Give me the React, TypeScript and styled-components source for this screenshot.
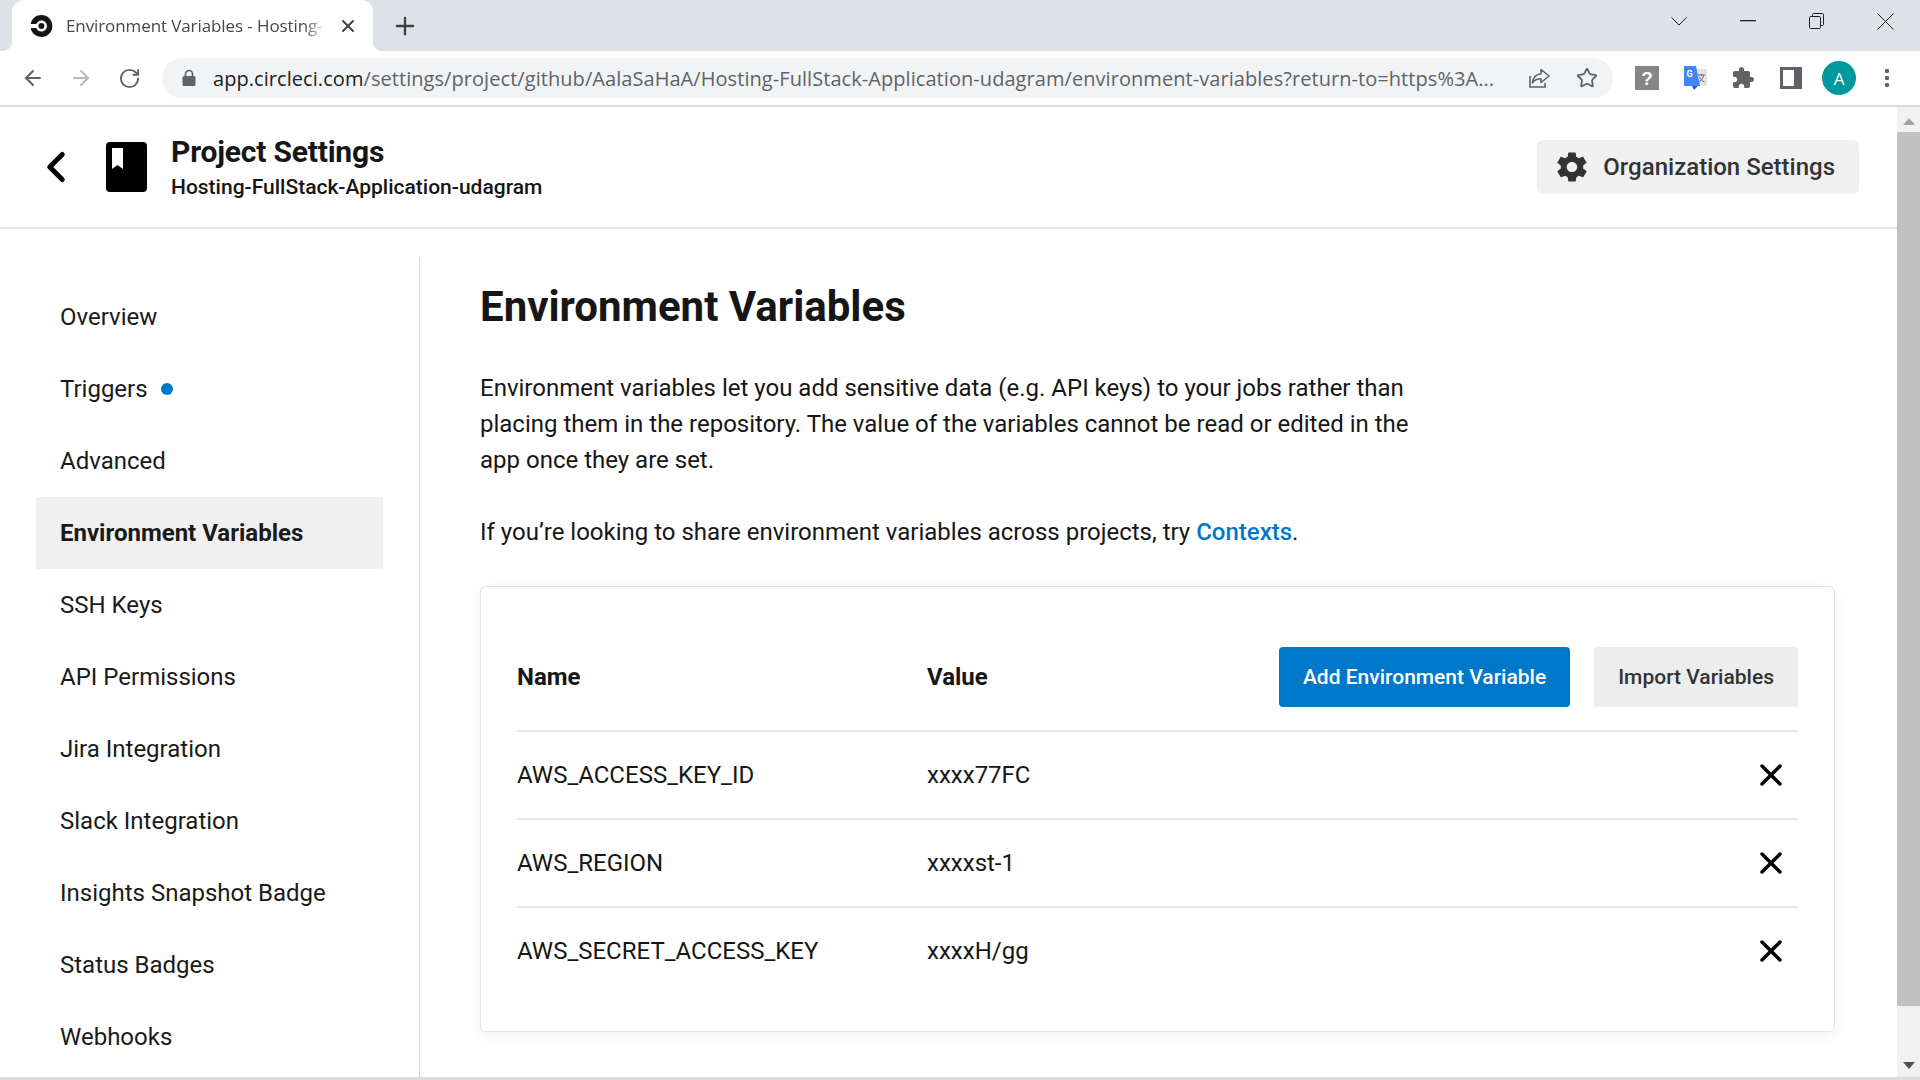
import React from "react";
import styled, { createGlobalStyle } from "styled-components";
import { ArrowLeft, ArrowRight, ChevronLeft, RotateCw, Star, X, Plus, EllipsisVertical } from "lucide-react";
import { IoMdSettings } from "react-icons/io";

const GlobalStyle = createGlobalStyle`
  html, body {
    margin: 0;
    height: 100%;
    overflow: hidden;
    background: #fff;
  }
  * {
    box-sizing: border-box;
  }
`;

const Window = styled.div`
  display: flex;
  flex-direction: column;
  width: 1920px;
  height: 1080px;
  overflow: hidden;
  font-family: Roboto, "Liberation Sans", sans-serif;
  color: #161616;
`;

/* browser chrome */

const TabStrip = styled.div`
  display: flex;
  align-items: flex-end;
  flex: none;
  height: 51px;
  padding-left: 12px;
  background: #dee1e6;
`;

const Tab = styled.div`
  position: relative;
  display: flex;
  align-items: center;
  width: 361px;
  height: 51px;
  padding: 0 15px 0 17px;
  background: #fff;
  border-radius: 12px 12px 0 0;

  &::before,
  &::after {
    content: "";
    position: absolute;
    bottom: 0;
    width: 10px;
    height: 10px;
  }
  &::before {
    left: -10px;
    background: radial-gradient(circle at 0 0, #dee1e6 10px, #fff 10.5px);
  }
  &::after {
    right: -10px;
    background: radial-gradient(circle at 100% 0, #dee1e6 10px, #fff 10.5px);
  }
`;

const TabTitle = styled.span`
  flex: 1;
  margin-left: 13px;
  white-space: nowrap;
  font-family: "Open Sans", "Noto Sans", sans-serif;
  font-size: 17px;
  letter-spacing: -0.1px;
  color: #45474a;
  -webkit-mask-image: linear-gradient(to right, #000 90%, transparent 100%);
  mask-image: linear-gradient(to right, #000 90%, transparent 100%);
`;

const TabClose = styled.span`
  display: flex;
  margin-left: 9px;
  color: #3c4043;
`;

const NewTab = styled.span`
  display: flex;
  margin: 0 0 7px 18px;
  align-self: flex-end;
  height: 36px;
  align-items: center;
  color: #3c4043;
`;

const WindowControls = styled.div`
  display: flex;
  margin-left: auto;
  align-self: flex-start;
  height: 42px;
`;

const WindowControl = styled.span`
  display: flex;
  align-items: center;
  justify-content: center;
  width: 69px;
  color: #202124;
`;

const Toolbar = styled.div`
  display: flex;
  align-items: center;
  flex: none;
  height: 56px;
  padding: 0 9px;
  background: #fff;
  border-bottom: 2px solid #dadce0;
`;

const NavButton = styled.span<{ $faded?: boolean }>`
  display: flex;
  align-items: center;
  justify-content: center;
  width: 48px;
  color: ${(p) => (p.$faded ? "#b6b8bb" : "#5f6368")};
`;

const AddressBar = styled.div`
  display: flex;
  align-items: center;
  width: 1451px;
  height: 40px;
  margin: 0 10px 0 9px;
  padding: 0 2px 0 20px;
  background: #f1f3f4;
  border-radius: 20px;
`;

const Url = styled.span`
  flex: 1;
  margin-left: 17px;
  white-space: nowrap;
  overflow: hidden;
  font-family: "Open Sans", "Noto Sans", sans-serif;
  font-size: 20px;
  letter-spacing: 0.06px;
  color: #5f6368;

  b {
    font-weight: 400;
    color: #202124;
  }
`;

const BarIcon = styled.span`
  display: flex;
  align-items: center;
  justify-content: center;
  flex: none;
  width: 48px;
  color: #5f6368;
`;

const Avatar = styled.span`
  display: flex;
  align-items: center;
  justify-content: center;
  width: 34px;
  height: 34px;
  border-radius: 50%;
  background: #00989f;
  color: #fff;
  font-family: "Open Sans", sans-serif;
  font-size: 17px;
`;

/* page */

const Viewport = styled.div`
  display: flex;
  flex: 1;
  min-height: 0;
`;

const Page = styled.div`
  display: flex;
  flex-direction: column;
  flex: 1;
  min-width: 0;
`;

const Header = styled.header`
  display: flex;
  align-items: center;
  flex: none;
  height: 122px;
  padding: 0 38px 0 31px;
  border-bottom: 2px solid #e3e3e3;
`;

const BackLink = styled.span`
  display: flex;
  color: #000;
`;

const BookIcon = styled.svg`
  width: 41px;
  height: 50px;
  margin-left: 25px;
  flex: none;
`;

const HeaderText = styled.div`
  margin-left: 24px;
`;

const PageTitle = styled.div`
  font-size: 30px;
  line-height: 36px;
  font-weight: 700;
  letter-spacing: -0.2px;
`;

const RepoName = styled.div`
  font-size: 21px;
  line-height: 26px;
  font-weight: 500;
  margin-top: 4px;
`;

const OrgButton = styled.button`
  display: flex;
  align-items: center;
  gap: 13px;
  height: 54px;
  margin-left: auto;
  padding: 0 24px 0 17px;
  border: 0;
  border-radius: 6px;
  background: #f0f0f0;
  color: #333;
  font: 500 24px Roboto, sans-serif;
`;

const Body = styled.div`
  display: flex;
  flex: 1;
  min-height: 0;
  padding-top: 28px;
`;

const Sidebar = styled.nav`
  flex: none;
  width: 420px;
  padding: 24px 36px 0;
  border-right: 1px solid #d6d6d6;
`;

const NavItem = styled.div<{ $active?: boolean }>`
  display: flex;
  align-items: center;
  width: 347px;
  height: 72px;
  padding-left: 24px;
  font-size: 24px;
  font-weight: ${(p) => (p.$active ? 700 : 400)};
  background: ${(p) => (p.$active ? "#f0f0f0" : "transparent")};
  color: #1a1a1a;
`;

const Dot = styled.span`
  width: 12px;
  height: 12px;
  margin-left: 13px;
  border-radius: 50%;
  background: #0078ca;
`;

const Content = styled.main`
  flex: 1;
  padding: 26px 62px 0 60px;
`;

const Heading = styled.h1`
  margin: 0 0 39px;
  font-size: 42px;
  line-height: 48px;
  font-weight: 700;
`;

const Text = styled.p`
  margin: 0 0 36px;
  max-width: 960px;
  font-size: 24px;
  line-height: 36px;
`;

const Link = styled.a`
  color: #0078ca;
  font-weight: 500;
`;

const Card = styled.section`
  height: 446px;
  padding: 60px 36px 36px;
  border: 1px solid #e3e3e3;
  border-radius: 6px;
  box-shadow: 0 4px 14px rgba(0, 0, 0, 0.05);
  background: #fff;
`;

const Row = styled.div`
  display: grid;
  grid-template-columns: 410px 1fr auto;
  align-items: center;
  height: 88px;
  font-size: 24px;
  border-top: 2px solid #e8e8e8;
`;

const HeadRow = styled(Row)`
  height: 83px;
  padding-bottom: 23px;
  border-top: 0;
  font-weight: 700;
`;

const Actions = styled.div`
  display: flex;
  gap: 24px;
`;

const Button = styled.button<{ $primary?: boolean }>`
  height: 60px;
  padding: 0 24px;
  border: 0;
  border-radius: 4px;
  background: ${(p) => (p.$primary ? "#0078ca" : "#ededed")};
  color: ${(p) => (p.$primary ? "#fff" : "#333")};
  font: 500 21px Roboto, sans-serif;
`;

const DeleteButton = styled.span`
  display: flex;
  margin-right: 9px;
  color: #000;
`;

const BottomEdge = styled.div`
  flex: none;
  height: 3px;
  background: #dcdcdc;
`;

/* fake scrollbar of the window */

const Scrollbar = styled.div`
  display: flex;
  flex-direction: column;
  align-items: center;
  flex: none;
  width: 23px;
  background: #f1f1f1;
`;

const ScrollArrow = styled.span<{ $down?: boolean }>`
  flex: none;
  width: 0;
  height: 0;
  margin: ${(p) => (p.$down ? "auto 0 8px" : "11px 0 7px")};
  border-left: 6px solid transparent;
  border-right: 6px solid transparent;
  ${(p) =>
    p.$down
      ? "border-top: 7px solid #505050;"
      : "border-bottom: 7px solid #a3a3a3;"}
`;

const ScrollThumb = styled.div`
  flex: none;
  width: 100%;
  height: 874px;
  background: #c1c1c1;
`;

const navItems = [
  "Overview",
  "Triggers",
  "Advanced",
  "Environment Variables",
  "SSH Keys",
  "API Permissions",
  "Jira Integration",
  "Slack Integration",
  "Insights Snapshot Badge",
  "Status Badges",
  "Webhooks",
];

const variables = [
  { name: "AWS_ACCESS_KEY_ID", value: "xxxx77FC" },
  { name: "AWS_REGION", value: "xxxxst-1" },
  { name: "AWS_SECRET_ACCESS_KEY", value: "xxxxH/gg" },
];

const CircleLogo = () => (
  <svg width="24" height="24" viewBox="0 0 24 24">
    <circle cx="12.4" cy="12" r="3" fill="#161616" />
    <path
      d="M12.4 1C7.3 1 3 4.5 1.8 9.2c0 .1-.1.2-.1.3 0 .3.3.6.6.6h4.6c.2 0 .4-.1.5-.3.9-2 2.900-3.300 5-3.300 3.100 0 5.500 2.400 5.500 5.500s-2.400 5.500-5.500 5.500c-2.200 0-4.100-1.300-5-3.300-.1-.2-.3-.3-.5-.3H2.300c-.3 0-.6.300-.6.600 0 .1 0 .2.100.3C3 19.500 7.300 23 12.400 23c6.100 0 11-4.900 11-11S18.500 1 12.400 1z"
      fill="#161616"
    />
  </svg>
);

const Lock = () => (
  <svg width="14" height="18" viewBox="0 0 14 18" fill="#5f6368">
    <path d="M2 7h10a1.500 1.500 0 0 1 1.500 1.500v7A1.500 1.500 0 0 1 12 17H2a1.500 1.500 0 0 1-1.500-1.500v-7A1.500 1.500 0 0 1 2 7z" />
    <path d="M3.500 7V5a3.500 3.500 0 0 1 7 0v2" fill="none" stroke="#5f6368" strokeWidth="1.700" />
  </svg>
);

const Share = () => (
  <svg width="24" height="24" viewBox="0 0 24 24" fill="none" stroke="#5f6368" strokeWidth="1.600">
    <path d="M3 10v11h15v-4" />
    <path d="M14 3.500 22 10l-8 6.500v-3.700c-4 0-6.500 1.200-8.500 4 .5-5 3.500-8.500 8.500-9z" strokeLinejoin="round" />
  </svg>
);

const HelpExtension = () => (
  <svg width="24" height="24" viewBox="0 0 24 24">
    <rect width="24" height="24" fill="#868686" />
    <text x="12" y="19" textAnchor="middle" fontFamily="Liberation Sans, sans-serif" fontWeight="700" fontSize="19" fill="#fff">
      ?
    </text>
  </svg>
);

const TranslateExtension = () => (
  <svg width="25" height="26" viewBox="0 0 25 26">
    <rect x="9" y="4" width="15" height="17" rx="1" fill="#e3e3e3" />
    <path d="M1 1h12l4 20H1z" fill="#4285f4" />
    <path d="M9 21h6l-4 4z" fill="#2a5dbb" />
    <text x="3.500" y="12" fontFamily="Roboto, sans-serif" fontWeight="700" fontSize="9" fill="#fff">
      G
    </text>
    <path d="M15 10h7M18.500 9v1.500M16 17c2.500-1.500 4-4 4.500-6.500M16.500 12c.8 2 2.500 4 5 5" stroke="#666" strokeWidth="1" fill="none" />
  </svg>
);

const PuzzleExtension = () => (
  <svg width="24" height="24" viewBox="0 0 24 24" fill="#5f6368">
    <path d="M20.500 11H19V7c0-1.100-.900-2-2-2h-4V3.500C13 2.120 11.880 1 10.500 1S8 2.120 8 3.500V5H4c-1.100 0-1.990.900-1.990 2v3.800H3.500c1.490 0 2.700 1.210 2.700 2.700s-1.210 2.700-2.700 2.700H2V20c0 1.100.900 2 2 2h3.800v-1.500c0-1.490 1.210-2.700 2.700-2.700 1.490 0 2.700 1.210 2.700 2.700V22H17c1.100 0 2-.900 2-2v-4h1.500c1.380 0 2.500-1.120 2.500-2.500S21.880 11 20.500 11z" />
  </svg>
);

const SidePanel = () => (
  <svg width="22" height="22" viewBox="0 0 22 22">
    <path d="M0 0h22v22H0z" fill="#5f6368" />
    <path d="M3 3h11v16H3z" fill="#fff" />
  </svg>
);

const TabListChevron = () => (
  <svg width="16" height="9" viewBox="0 0 16 9" fill="none" stroke="#202124" strokeWidth="1">
    <path d="M.500.500 8 8 15.500.500" />
  </svg>
);

const Minimize = () => (
  <svg width="16" height="2" viewBox="0 0 16 2">
    <path d="M0 0h16v1.300H0z" fill="#202124" />
  </svg>
);

const Restore = () => (
  <svg width="15" height="16" viewBox="0 0 15 16" fill="none" stroke="#202124" strokeWidth="1">
    <rect x="0.500" y="3.500" width="11" height="12" rx="1" />
    <path d="M3.500 3.500V1.500a1 1 0 0 1 1-1h9a1 1 0 0 1 1 1v10a1 1 0 0 1-1 1h-2" />
  </svg>
);

const CloseWindow = () => (
  <svg width="17" height="17" viewBox="0 0 17 17" fill="none" stroke="#202124" strokeWidth="1">
    <path d="M.500.500l16 16M16.500.500l-16 16" />
  </svg>
);

const App = () => {
  return (
    <Window>
      <GlobalStyle />
      <TabStrip>
        <Tab>
          <CircleLogo />
          <TabTitle>Environment Variables - Hosting-</TabTitle>
          <TabClose>
            <X size={20} strokeWidth={2.4} />
          </TabClose>
        </Tab>
        <NewTab>
          <Plus size={28} strokeWidth={2} />
        </NewTab>
        <WindowControls>
          <WindowControl>
            <TabListChevron />
          </WindowControl>
          <WindowControl>
            <Minimize />
          </WindowControl>
          <WindowControl>
            <Restore />
          </WindowControl>
          <WindowControl>
            <CloseWindow />
          </WindowControl>
        </WindowControls>
      </TabStrip>

      <Toolbar>
        <NavButton>
          <ArrowLeft size={24} strokeWidth={2} />
        </NavButton>
        <NavButton $faded>
          <ArrowRight size={24} strokeWidth={2} />
        </NavButton>
        <NavButton>
          <RotateCw size={23} strokeWidth={2} />
        </NavButton>
        <AddressBar>
          <Lock />
          <Url>
            <b>app.circleci.com</b>/settings/project/github/AalaSaHaA/Hosting-FullStack-Application-udagram/environment-variables?return-to=https%3A...
          </Url>
          <BarIcon>
            <Share />
          </BarIcon>
          <BarIcon>
            <Star size={22} strokeWidth={2} />
          </BarIcon>
        </AddressBar>
        <BarIcon>
          <HelpExtension />
        </BarIcon>
        <BarIcon>
          <TranslateExtension />
        </BarIcon>
        <BarIcon>
          <PuzzleExtension />
        </BarIcon>
        <BarIcon>
          <SidePanel />
        </BarIcon>
        <BarIcon>
          <Avatar>A</Avatar>
        </BarIcon>
        <BarIcon>
          <EllipsisVertical size={24} strokeWidth={2.4} />
        </BarIcon>
      </Toolbar>

      <Viewport>
        <Page>
          <Header>
            <BackLink>
              <ChevronLeft size={50} strokeWidth={2.4} />
            </BackLink>
            <BookIcon viewBox="0 0 41 50">
              <path d="M4 0h33a4 4 0 0 1 4 4v42a4 4 0 0 1-4 4H4a4 4 0 0 1-4-4V4a4 4 0 0 1 4-4z" fill="#000" />
              <path d="M6 6h11v21l-5.500-4L6 27z" fill="#fff" />
            </BookIcon>
            <HeaderText>
              <PageTitle>Project Settings</PageTitle>
              <RepoName>Hosting-FullStack-Application-udagram</RepoName>
            </HeaderText>
            <OrgButton>
              <IoMdSettings size={36} />
              Organization Settings
            </OrgButton>
          </Header>
          <Body>
            <Sidebar>
              {navItems.map((item) => (
                <NavItem key={item} $active={item === "Environment Variables"}>
                  {item}
                  {item === "Triggers" && <Dot />}
                </NavItem>
              ))}
            </Sidebar>
            <Content>
              <Heading>Environment Variables</Heading>
              <Text>
                Environment variables let you add sensitive data (e.g. API keys) to your jobs rather than placing them in the repository. The value of the variables cannot be read or edited in the app once they are set.
              </Text>
              <Text>
                If you’re looking to share environment variables across projects, try <Link>Contexts</Link>.
              </Text>
              <Card>
                <HeadRow>
                  <span>Name</span>
                  <span>Value</span>
                  <Actions>
                    <Button $primary>Add Environment Variable</Button>
                    <Button>Import Variables</Button>
                  </Actions>
                </HeadRow>
                {variables.map((v) => (
                  <Row key={v.name}>
                    <span>{v.name}</span>
                    <span>{v.value}</span>
                    <DeleteButton>
                      <X size={36} strokeWidth={2.3} />
                    </DeleteButton>
                  </Row>
                ))}
              </Card>
            </Content>
          </Body>
        </Page>
        <Scrollbar>
          <ScrollArrow />
          <ScrollThumb />
          <ScrollArrow $down />
        </Scrollbar>
      </Viewport>
      <BottomEdge />
    </Window>
  );
};

export default App;
